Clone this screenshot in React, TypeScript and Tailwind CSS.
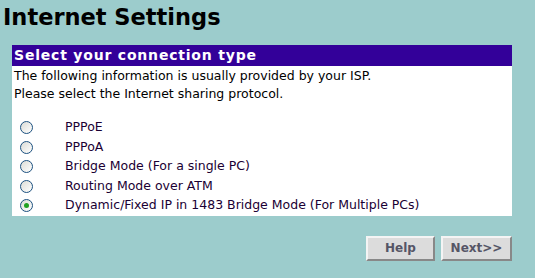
import { useState } from 'react';

const options = [
  'PPPoE',
  'PPPoA',
  'Bridge Mode (For a single PC)',
  'Routing Mode over ATM',
  'Dynamic/Fixed IP in 1483 Bridge Mode (For Multiple PCs)',
];

function Radio({ checked }: { checked: boolean }) {
  return (
    <span className="w-[13px] h-[13px] rounded-full border border-[#1c5180] bg-gradient-to-br from-[#dcdcd6] to-[#ffffff] flex items-center justify-center">
      {checked && <span className="w-[5px] h-[5px] rounded-full bg-[#21a121]" />}
    </span>
  );
}

export default function App() {
  const [selected, setSelected] = useState(4);

  return (
    <div className="w-[535px] h-[278px] bg-[#9ccccc] text-black font-['DejaVu_Sans',Verdana,sans-serif] overflow-hidden">
      <h1 className="pl-[3px] pt-[4px] text-[22.5px] leading-[26px] font-bold">Internet Settings</h1>
      <div className="ml-[12px] mt-[15px] w-[500px] bg-white">
        <div className="bg-[#330099] text-white font-bold text-[14px] tracking-[0.8px] leading-[21px] px-[2px]">
          Select your connection type
        </div>
        <div className="px-[2px] pt-[1px] text-[12.5px] leading-[18px]">
          <p>The following information is usually provided by your ISP.</p>
          <p>Please select the Internet sharing protocol.</p>
        </div>
        <div className="pt-[15px]">
          {options.map((o, i) => (
            <label
              key={o}
              onClick={() => setSelected(i)}
              className="flex items-center h-[19.5px] text-[12.5px] text-[#1a0033] cursor-pointer"
            >
              <span className="w-[53px] pl-[8px]">
                <Radio checked={selected === i} />
              </span>
              <span>{o}</span>
            </label>
          ))}
        </div>
      </div>
      <div className="flex justify-end gap-[6px] w-[512px] mt-[20px]">
        <button className="w-[69px] h-[25px] bg-[#dcdcdc] border-2 border-t-[#f4f4f4] border-l-[#f4f4f4] border-r-[#888888] border-b-[#888888] text-[12px] font-bold text-[#555566]">
          Help
        </button>
        <button className="w-[71px] h-[25px] bg-[#dcdcdc] border-2 border-t-[#f4f4f4] border-l-[#f4f4f4] border-r-[#888888] border-b-[#888888] text-[12px] font-bold text-[#555566]">
          Next&gt;&gt;
        </button>
      </div>
    </div>
  );
}
